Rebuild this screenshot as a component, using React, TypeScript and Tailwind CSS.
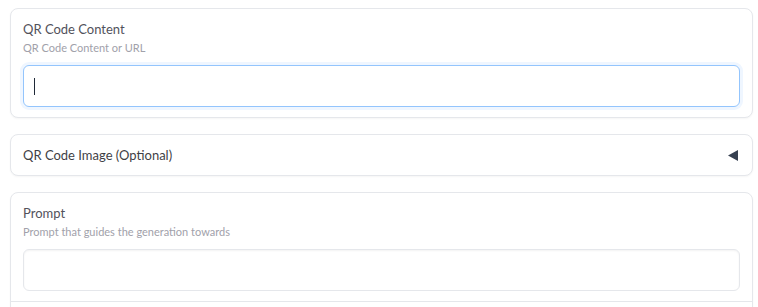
export default function App() {
  const font = { fontFamily: "Lato, 'Liberation Sans', sans-serif" };
  return (
    <div className="w-[758px] h-[307px] overflow-hidden bg-white pt-2 pl-[10px] pr-[5px]" style={font}>
      <div className="flex flex-col gap-[16px]">
        {/* Card 1 */}
        <div className="rounded-lg border border-[#e5e7eb] bg-white shadow-[0_1px_2px_rgba(0,0,0,0.04)] px-3 py-[10px]">
          <div className="text-[13px] leading-[20px] text-[#52525b]">QR Code Content</div>
          <div className="mt-[1px] text-[11px] leading-[16px] text-[#a1a1aa]">QR Code Content or URL</div>
          <div className="mt-[9px] flex h-[42px] items-center rounded-md border border-[#93c5fd] bg-white pl-[10px] shadow-[0_0_0_3px_#eff6ff]">
            <div className="h-[17px] w-px bg-[#1f2937]" />
          </div>
        </div>

        {/* Card 2 */}
        <div className="flex items-center justify-between rounded-lg border border-[#e5e7eb] bg-white shadow-[0_1px_2px_rgba(0,0,0,0.04)] px-3 py-[10px]">
          <div className="text-[13px] leading-[20px] text-[#3f3f46]">QR Code Image (Optional)</div>
          <svg width="10" height="11" viewBox="0 0 10 11" className="mr-[2px]">
            <polygon points="10,0 10,11 0,5.5" fill="#374151" />
          </svg>
        </div>

        {/* Card 3 */}
        <div className="rounded-lg border border-[#e5e7eb] bg-white shadow-[0_1px_2px_rgba(0,0,0,0.04)]">
          <div className="px-3 py-[10px]">
            <div className="text-[13px] leading-[20px] text-[#52525b]">Prompt</div>
            <div className="mt-[1px] text-[11px] leading-[16px] text-[#a1a1aa]">Prompt that guides the generation towards</div>
            <div className="mt-[9px] h-[42px] rounded-md border border-[#e5e7eb] bg-white shadow-[inset_0_1px_2px_rgba(0,0,0,0.05)]" />
          </div>
          <div className="h-[60px] border-t border-[#e5e7eb]" />
        </div>
      </div>
    </div>
  );
}
